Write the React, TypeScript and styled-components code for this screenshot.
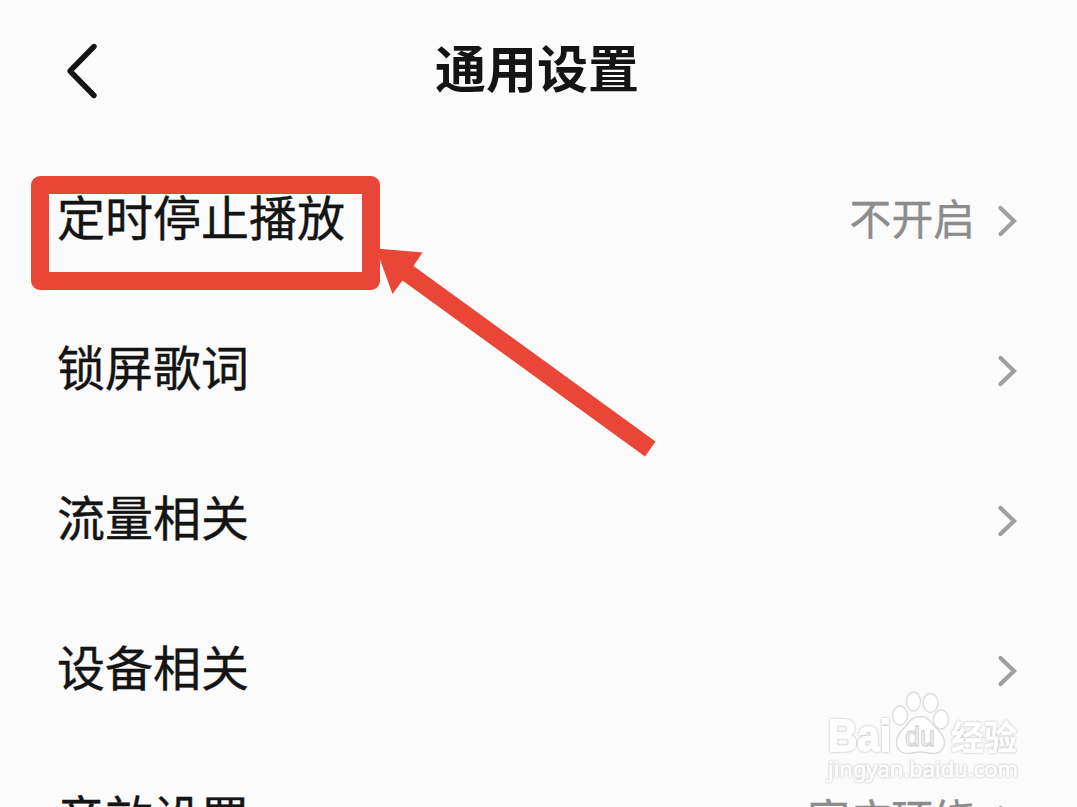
import React from 'react';
import styled, { createGlobalStyle } from 'styled-components';

interface SettingType {
    label: string;
    value?: string;
}

const settings: SettingType[] = [
    { label: '定时停止播放', value: '不开启' },
    { label: '锁屏歌词' },
    { label: '流量相关' },
    { label: '设备相关' },
    { label: '音效设置', value: '宽广环绕' },
];

const BackIcon = () => (
    <svg width="36" height="60" viewBox="0 0 36 60" fill="none">
        <path d="M30 5.5L6 30L30 54.5" stroke="#141414" strokeWidth="5.4" strokeLinecap="round" strokeLinejoin="round" />
    </svg>
);

const ArrowIcon = () => (
    <svg width="24" height="36" viewBox="0 0 24 36" fill="none">
        <path d="M4.5 5L18 18L4.5 31" stroke="#a0a0a0" strokeWidth="4.2" strokeLinecap="round" strokeLinejoin="miter" />
    </svg>
);

const Watermark = () => (
    <WatermarkSvg width="210" height="107" viewBox="820 685 210 107">
        <g fill="#fff" stroke="#dadada" strokeWidth="1.3">
            <ellipse cx="900" cy="715.5" rx="7.5" ry="9.5" />
            <ellipse cx="913.5" cy="701.5" rx="7" ry="9.5" />
            <ellipse cx="930.5" cy="703" rx="7.5" ry="9.5" />
            <ellipse cx="941" cy="719.5" rx="7.5" ry="9.5" />
            <path d="M920 716.5C912 716.5 909 722 905 727C900 732 896.5 736 896.5 742C896.5 749 901 753.5 908 753.5C913 753.5 915 752 920 752C925 752 928 753.5 933 753.5C940 753.5 944.5 749 944.5 743C944.5 736 940 732 935 727C931 722 928 716.5 920 716.5Z" />
        </g>
        <text className="brand" x="828" y="751" textLength="63" lengthAdjust="spacingAndGlyphs">Bai</text>
        <text className="du" x="905" y="746" textLength="30" lengthAdjust="spacingAndGlyphs">du</text>
        <text className="name" x="951" y="749.5" textLength="66" lengthAdjust="spacingAndGlyphs">经验</text>
        <text className="site" x="828" y="777" textLength="190" lengthAdjust="spacingAndGlyphs">jingyan.baidu.com</text>
    </WatermarkSvg>
);

const App: React.FC = () => {
    return (
        <Page>
            <GlobalStyle />
            <Header>
                <BackButton aria-label="返回"><BackIcon /></BackButton>
                <Title>通用设置</Title>
            </Header>
            <List>
                {settings.map((item) => (
                    <Row key={item.label}>
                        <Label>{item.label}</Label>
                        {item.value && <Value>{item.value}</Value>}
                        <ArrowIcon />
                    </Row>
                ))}
            </List>
            <Highlight />
            <Pointer width="290" height="220" viewBox="370 240 290 220">
                <path d="M376 248.5L422.5 252.5L413.5 266L655.5 441.5L645 456.5L402.5 280.5L392.5 294Z" fill="#ea4638" />
            </Pointer>
            <Watermark />
        </Page>
    );
};

export default App;

const GlobalStyle = createGlobalStyle`
    * {
        box-sizing: border-box;
    }
    body {
        margin: 0;
        overflow: hidden;
        background: #fbfbfb;
        font-family: 'Noto Sans CJK SC', sans-serif;
    }
`;

const Page = styled.div`
    position: relative;
    width: 1077px;
    height: 807px;
    overflow: hidden;
    background: #fbfbfb;
    color: #141414;
`;

const Header = styled.header`
    display: grid;
    grid-template-columns: 100px 1fr 100px;
    align-items: center;
    height: 142px;
    padding: 0 3px 0 0;
`;

const BackButton = styled.button`
    display: flex;
    justify-content: flex-end;
    padding: 0;
    border: none;
    background: none;
    cursor: pointer;
`;

const Title = styled.h1`
    margin: 0;
    padding-bottom: 10px;
    font-size: 51px;
    line-height: 72px;
    font-weight: 700;
    text-align: center;
`;

const List = styled.div`
    display: flex;
    flex-direction: column;
    padding: 4px 57px 0 57px;
`;

const Row = styled.div`
    display: flex;
    align-items: center;
    flex-shrink: 0;
    height: 150px;
`;

const Label = styled.span`
    flex: 1;
    padding-bottom: 12px;
    font-size: 48px;
    line-height: 70px;
    -webkit-text-stroke: 0.4px currentColor;
`;

const Value = styled.span`
    margin-right: 21px;
    padding-bottom: 8px;
    color: #8c8c8c;
    font-size: 41.8px;
    line-height: 60px;
    -webkit-text-stroke: 0.4px currentColor;
`;

const Highlight = styled.div`
    position: absolute;
    left: 31px;
    top: 176px;
    width: 349px;
    height: 114px;
    border: 18px solid #ea4638;
    border-radius: 9px;
`;

const Pointer = styled.svg`
    position: absolute;
    left: 370px;
    top: 240px;
`;

const WatermarkSvg = styled.svg`
    position: absolute;
    left: 820px;
    top: 685px;

    text {
        fill: #fff;
        stroke: #fff;
        filter: drop-shadow(0 0 0.8px #b4b4b4);
    }
    .brand {
        font: 700 45px 'Liberation Sans', sans-serif;
        stroke-width: 1.8px;
    }
    .du {
        font: 400 28px 'Liberation Sans', sans-serif;
        stroke: #d4d4d4;
        stroke-width: 1.3px;
        filter: none;
    }
    .name {
        font: 700 34px 'Noto Sans CJK SC', sans-serif;
        stroke-width: 0.3px;
    }
    .site {
        font: 400 22px 'Noto Sans', sans-serif;
        stroke-width: 0.7px;
    }
`;
